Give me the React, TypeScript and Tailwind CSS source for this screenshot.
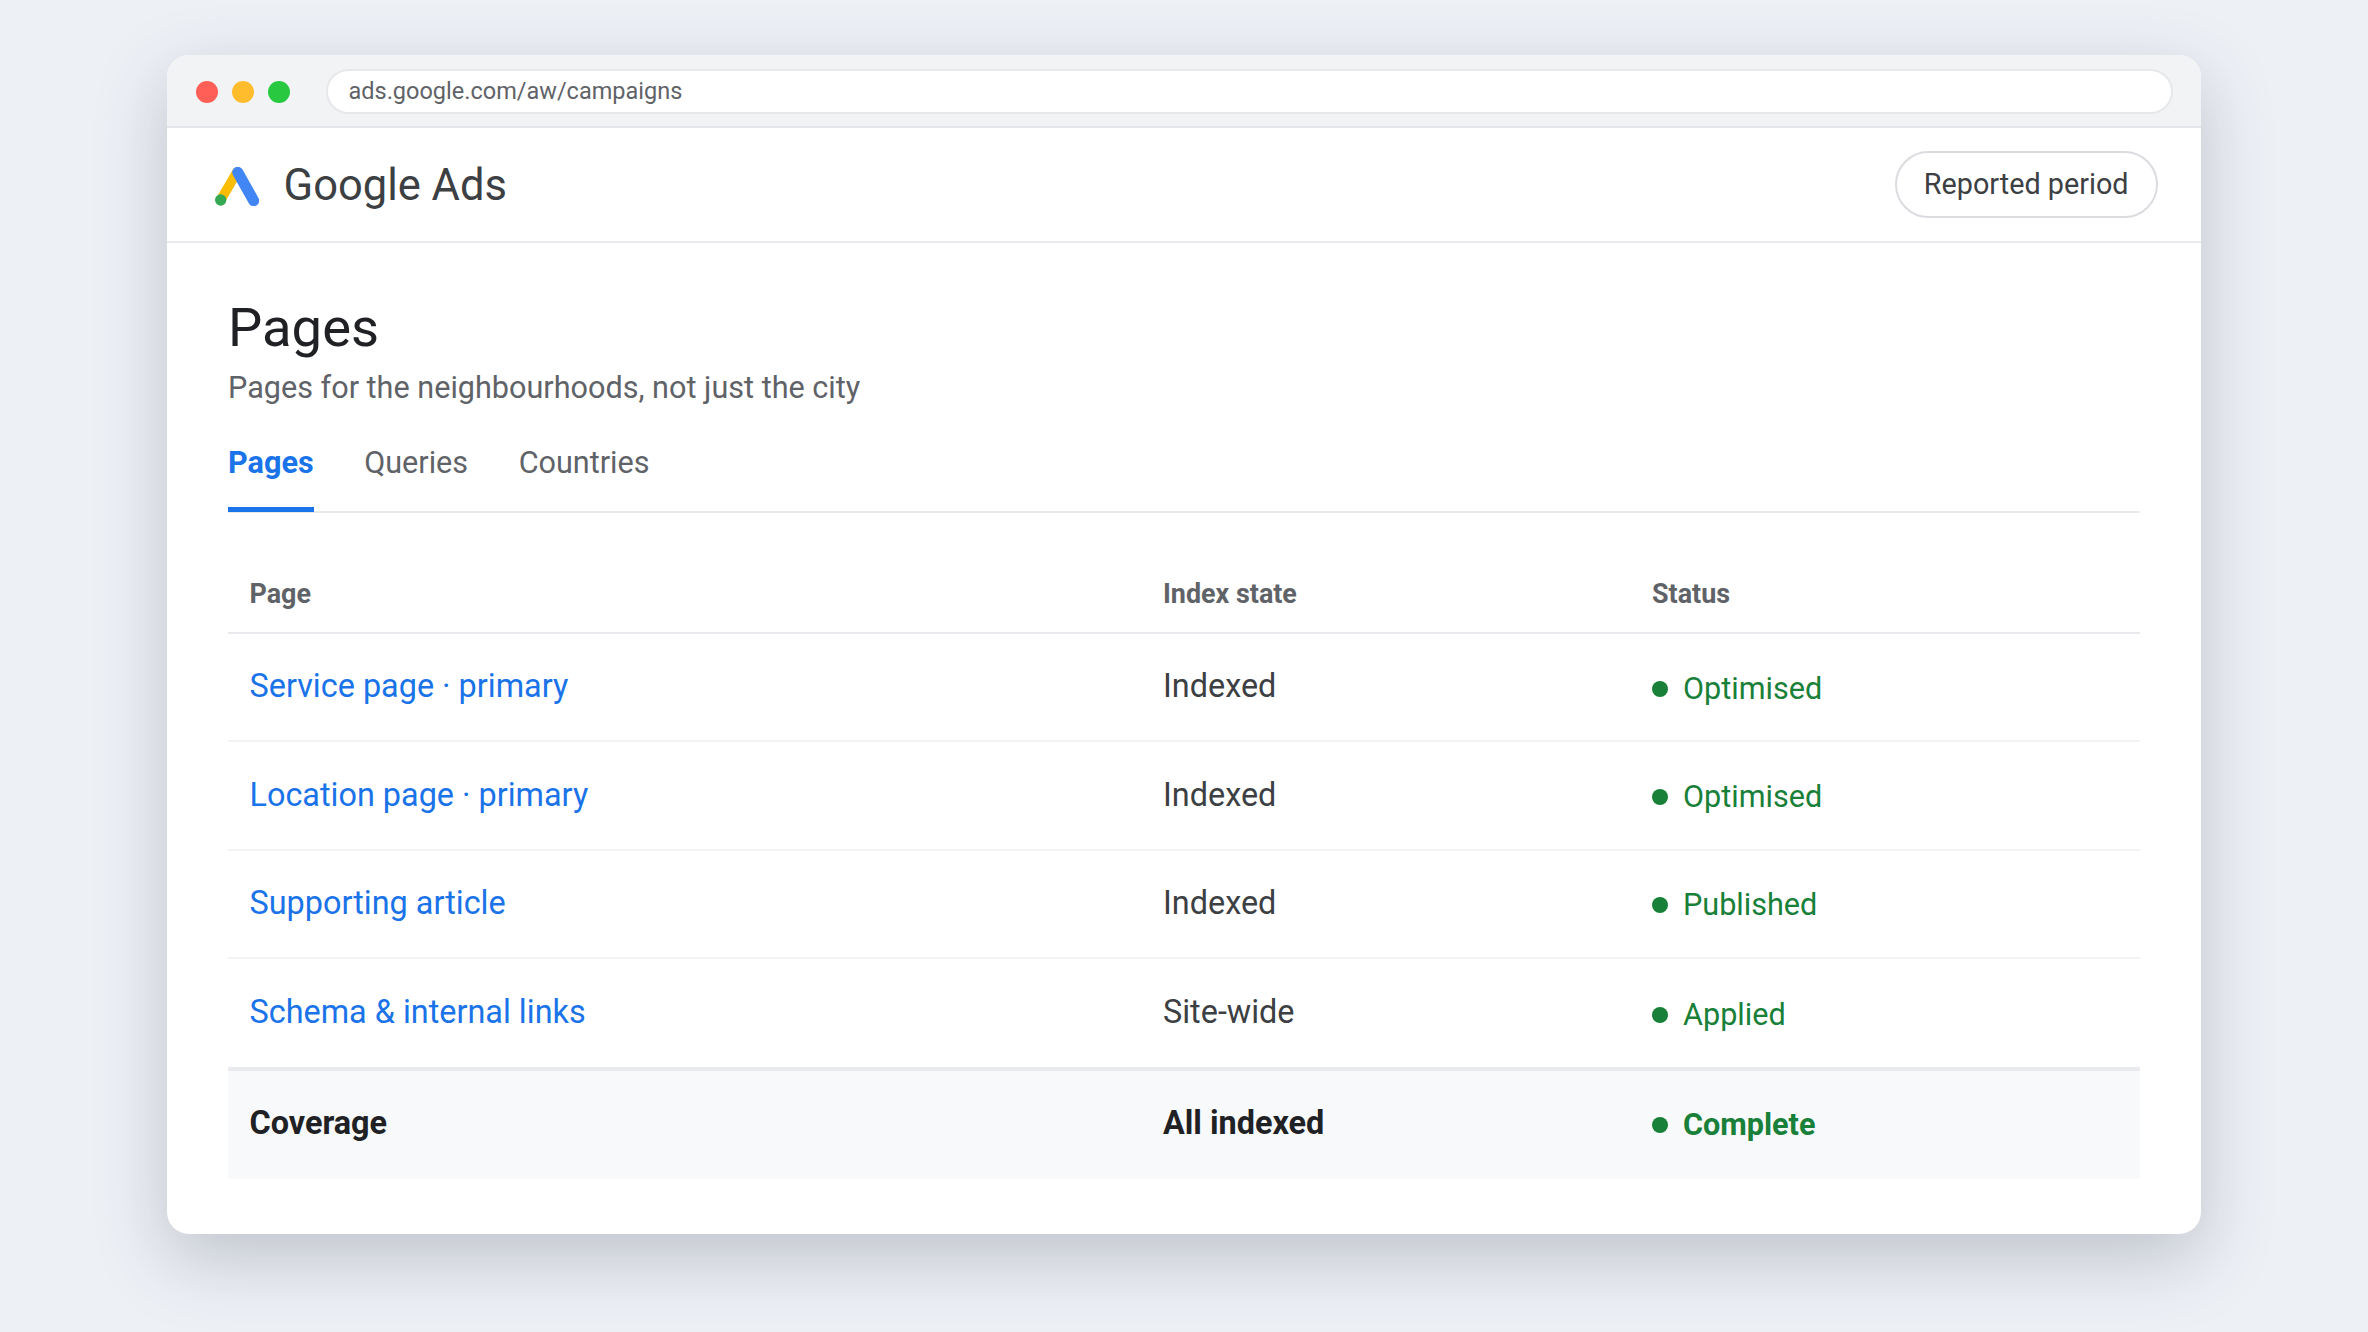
const rows = [
  { page: "Service page · primary", state: "Indexed", status: "Optimised" },
  { page: "Location page · primary", state: "Indexed", status: "Optimised" },
  { page: "Supporting article", state: "Indexed", status: "Published" },
  { page: "Schema & internal links", state: "Site-wide", status: "Applied" },
]

function GoogleAdsLogo() {
  return (
    <svg className="translate-y-[1px]" width="44" height="39" viewBox="0 0 44 39" fill="none">
      <path d="M22 5 L5.7 33" stroke="#FBBC04" strokeWidth="9.5" strokeLinecap="round" />
      <path d="M22.7 5.3 L38.7 33.7" stroke="#4285F4" strokeWidth="11" strokeLinecap="round" />
      <circle cx="5.7" cy="33" r="5.7" fill="#34A853" />
    </svg>
  )
}

function Status({ label, bold }: { label: string; bold?: boolean }) {
  return (
    <div className={`flex translate-y-[2px] items-center gap-[15px] text-[30.6px] text-[#188038] ${bold ? "font-bold" : ""}`}>
      <span className="h-4 w-4 rounded-full bg-[#188038]" />
      {label}
    </div>
  )
}

export default function App() {
  return (
    <div className="flex h-[1332px] justify-center overflow-hidden bg-[#edf0f5] pt-[55px] font-[family-name:Roboto,sans-serif]">
      <div className="h-[1178.5px] w-[2034px] overflow-hidden rounded-[22px] bg-white shadow-[0_24px_70px_rgba(60,64,90,0.26)]">
        {/* Browser chrome */}
        <div className="flex h-[73px] items-center gap-[14px] border-b-2 border-[#e3e5ea] bg-[#f1f3f5] pt-[2px] pr-[28.5px] pl-[29px]">
          <span className="h-[22px] w-[22px] rounded-full bg-[#ff5f57]" />
          <span className="h-[22px] w-[22px] rounded-full bg-[#ffbd2e]" />
          <span className="h-[22px] w-[22px] rounded-full bg-[#28c840]" />
          <div className="ml-[21.5px] flex h-[45px] flex-1 items-center rounded-full border-2 border-[#e6e8ec] bg-white pl-[21px] text-[23.5px] text-[#5f6368]">
            ads.google.com/aw/campaigns
          </div>
        </div>

        {/* App header */}
        <div className="flex h-[115px] items-center justify-between border-b-2 border-[#e8eaed] pr-[43.5px] pl-[48px]">
          <div className="mt-[2px] flex items-center gap-[24.5px]">
            <GoogleAdsLogo />
            <span className="text-[43.5px] text-[#3c4043]">Google Ads</span>
          </div>
          <button className="h-[67px] rounded-full border-2 border-[#dadce0] px-[27px] text-[28.75px] text-[#3c4043]">
            Reported period
          </button>
        </div>

        <div className="px-[61px] pt-[53px]">
          <h1 className="text-[54.4px] leading-[64px] font-normal text-[#202124]">Pages</h1>
          <p className="mt-[9.5px] text-[30.6px] leading-[36px] text-[#5f6368]">
            Pages for the neighbourhoods, not just the city
          </p>

          {/* Tabs */}
          <div className="mt-[39.5px] flex gap-[50.5px] border-b-2 border-[#e8eaed] text-[30.6px] leading-[36px]">
            <div className="-mb-[1px] border-b-[5px] border-[#1a73e8] pb-[26px] font-bold text-[#1a73e8]">Pages</div>
            <div className="pb-[26px] text-[#5f6368]">Queries</div>
            <div className="pb-[26px] text-[#5f6368]">Countries</div>
          </div>

          {/* Table */}
          <div className="mt-[65px] grid grid-cols-[914px_489px_1fr] border-b-2 border-[#e8eaed] pb-[22px] text-[26.9px] leading-[32px] font-bold text-[#5f6368]">
            <div className="pl-[21.5px]">Page</div>
            <div className="pl-[21px]">Index state</div>
            <div className="pl-[21px]">Status</div>
          </div>
          {rows.map((row, i) => (
            <div
              key={row.page}
              className={`grid h-[108.3px] grid-cols-[914px_489px_1fr] items-center pb-[1px] text-[32.4px] ${i < rows.length - 1 ? "border-b-2 border-[#f1f3f4]" : ""}`}
            >
              <div className="pl-[21.5px] text-[#1a73e8]">{row.page}</div>
              <div className="pl-[21px] text-[#3c4043]">{row.state}</div>
              <div className="pl-[21px]">
                <Status label={row.status} />
              </div>
            </div>
          ))}
          <div className="grid h-[111.5px] grid-cols-[914px_489px_1fr] items-center border-t-4 border-[#e8eaed] bg-[#f8f9fa] pb-[3px] text-[32.4px] font-bold text-[#202124]">
            <div className="pl-[21.5px]">Coverage</div>
            <div className="pl-[21px]">All indexed</div>
            <div className="pl-[21px]">
              <Status label="Complete" bold />
            </div>
          </div>
        </div>
      </div>
    </div>
  )
}
